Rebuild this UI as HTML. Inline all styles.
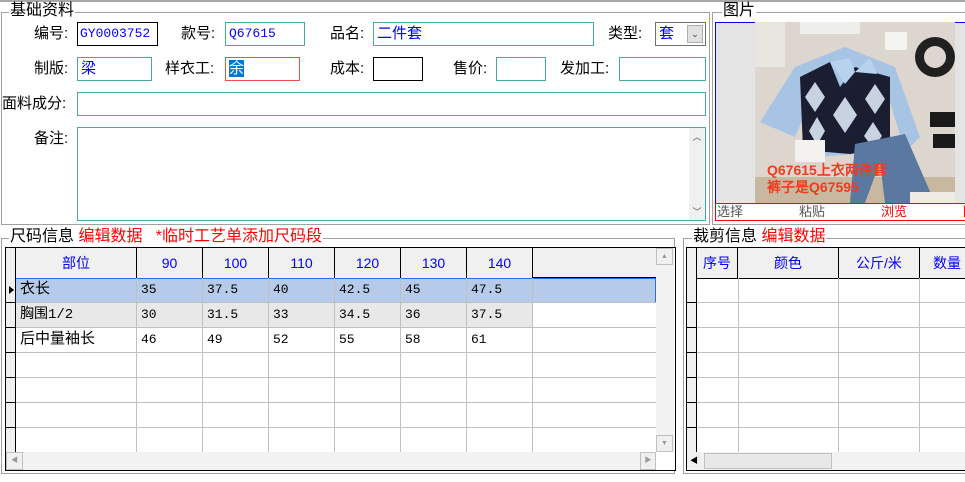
<!DOCTYPE html>
<html><head><meta charset="utf-8"><style>
*{box-sizing:border-box;margin:0;padding:0}
body{width:965px;height:482px;overflow:hidden;background:#fff;position:relative;font-family:"Liberation Sans","WenQuanYi Zen Hei","Noto Sans CJK SC",sans-serif;font-size:14px;color:#000}
.a{position:absolute;white-space:nowrap}
.fs{position:absolute;border:1px solid #a0a0a0;box-shadow:inset 1px 1px 0 #fff}
.lg{position:absolute;background:#fff;padding:0 1px;font-size:16px;line-height:18px}
.in{position:absolute;border:1px solid #4aa8a0;background:#fff;height:24px;line-height:22px;padding-left:3px;color:#0000ff;font-size:15px}
.lb{position:absolute;line-height:24px;font-size:15px}
.c{position:absolute;font-size:13px;line-height:24px;padding-left:4px;font-family:"Liberation Mono","WenQuanYi Zen Hei",monospace}
.h{position:absolute;background:#f0f0f0;border-right:1px solid #000;border-bottom:1px solid #000;color:#0000ff;text-align:center;line-height:30px;font-size:14px}
.red{color:#ff0000}
</style></head><body>
<div class="a" style="left:0;top:0;width:965px;height:2px;background:#a8a8a8"></div>

<div class="fs" style="left:1px;top:12px;width:709px;height:213px"></div>
<div class="lg" style="left:9px;top:2px">基础资料</div>
<div class="lb" style="left:34px;top:22px">编号:</div>
<div class="in" style="left:77px;top:22px;width:81px;border-color:#000;font-family:'Liberation Mono',monospace;font-size:13px;padding-left:2px">GY0003752</div>
<div class="lb" style="left:181px;top:22px">款号:</div>
<div class="in" style="left:225px;top:22px;width:80px;font-family:'Liberation Mono',monospace;font-size:13px">Q67615</div>
<div class="lb" style="left:330px;top:22px">品名:</div>
<div class="in" style="left:373px;top:22px;width:221px">二件套</div>
<div class="lb" style="left:608px;top:22px">类型:</div>
<div class="in" style="left:655px;top:22px;width:51px;border-color:#707070">套</div>
<div class="a" style="left:687px;top:25px;width:16px;height:18px;background:#e1e1e1;border:1px solid #adadad;font-size:9px;text-align:center;line-height:16px;color:#444">⌄</div>

<div class="lb" style="left:34px;top:57px">制版:</div>
<div class="in" style="left:77px;top:57px;width:75px">梁</div>
<div class="lb" style="left:165px;top:57px">样衣工:</div>
<div class="in" style="left:225px;top:57px;width:75px;border-color:#f05050"><span style="background:#0078d7;color:#fff">余</span></div>
<div class="lb" style="left:330px;top:57px">成本:</div>
<div class="in" style="left:373px;top:57px;width:50px;border-color:#000"></div>
<div class="lb" style="left:453px;top:57px">售价:</div>
<div class="in" style="left:496px;top:57px;width:50px"></div>
<div class="lb" style="left:560px;top:57px">发加工:</div>
<div class="in" style="left:619px;top:57px;width:87px"></div>

<div class="lb" style="left:2px;top:92px">面料成分:</div>
<div class="in" style="left:77px;top:92px;width:629px"></div>
<div class="lb" style="left:34px;top:127px">备注:</div>
<div class="in" style="left:77px;top:127px;width:629px;height:94px"></div>
<div class="a" style="left:689px;top:128px;width:16px;height:92px;background:#f0f0f0;font-size:9px;color:#555;text-align:center">
<div style="margin-top:2px">︿</div><div style="margin-top:62px">﹀</div></div>

<div class="fs" style="left:712px;top:12px;width:260px;height:213px"></div>
<div class="lg" style="left:722px;top:2px">图片</div>
<div class="a" style="left:715px;top:22px;width:260px;height:199px;border:1px solid #0000ff;background:#e4e4e4"></div>
<svg class="a" style="left:755px;top:22px" width="200" height="181" viewBox="0 0 200 181">
<rect width="200" height="181" fill="#ddd6ce"/>
<rect x="0" y="155" width="200" height="26" fill="#c8b8a0"/>
<rect x="45" y="0" width="60" height="12" fill="#eeeeea"/>
<rect x="0" y="0" width="30" height="45" fill="#e8e6e0"/>
<circle cx="180" cy="35" r="20" fill="#202020"/><circle cx="180" cy="35" r="11" fill="#ddd6ce"/>
<rect x="130" y="10" width="22" height="18" fill="#f4f4f0"/>
<path d="M40 45 L90 25 L140 45 L165 115 L150 130 L135 80 L130 130 L60 135 L55 80 L40 115 L5 100 Z" fill="#a8c4e4"/>
<path d="M45 55 L75 40 L85 65 L100 45 L135 55 L135 125 L95 132 L48 128 Z" fill="#1a1e30"/>
<path d="M60 60 l10 15 l-10 15 l-10 -15z M90 75 l12 18 l-12 18 l-12 -18z M120 62 l10 15 l-10 15 l-10 -15z M62 95 l8 14 l-8 14 l-8 -14z M118 100 l9 14 l-9 12 l-9 -12z" fill="#c8d2e0"/>
<path d="M75 40 L95 36 L100 50 L90 62 Z M100 50 L115 36 L122 52 Z" fill="#b8d2ee"/>
<path d="M100 122 L150 112 L180 181 L130 181 L125 140 L110 181 L95 181 Z" fill="#5a78a0"/>
<rect x="40" y="118" width="30" height="22" fill="#f4f2ee"/>
<rect x="175" y="90" width="25" height="15" fill="#1a1a1a"/><rect x="178" y="112" width="22" height="14" fill="#1a1a1a"/>
<rect x="155" y="170" width="45" height="11" fill="#f0ece4"/>
<text x="12" y="153" font-family="Liberation Sans,WenQuanYi Zen Hei,sans-serif" font-size="14" font-weight="bold" fill="#f03c1e">Q67615上衣两件套</text>
<text x="12" y="170" font-family="Liberation Sans,WenQuanYi Zen Hei,sans-serif" font-size="14" font-weight="bold" fill="#f03c1e">裤子是Q67595</text>
</svg>
<div class="a" style="left:715px;top:203px;width:260px;height:18px;border:1px solid #ff0000;background:#fff;font-size:13px;line-height:16px;color:#555">
<span class="a" style="left:1px">选择</span><span class="a" style="left:83px">粘贴</span><span class="a red" style="left:165px">浏览</span><span class="a red" style="left:247px">图</span></div>

<div class="fs" style="left:1px;top:238px;width:674px;height:236px"></div>
<div class="lg" style="left:9px;top:228px">尺码信息 <span class="red">编辑数据 &nbsp; *临时工艺单添加尺码段</span></div>
<div class="a" style="left:5px;top:247px;width:671px;height:224px;border:1px solid #000;background:#fff"></div>
<div class="a" style="left:6px;top:248px;width:10px;height:204px;background:#f0f0f0;border-right:1px solid #000"></div>
<div class="h" style="left:16px;top:248px;width:121px">部位</div>
<div class="h" style="left:137px;top:248px;width:66px">90</div>
<div class="h" style="left:203px;top:248px;width:66px">100</div>
<div class="h" style="left:269px;top:248px;width:66px">110</div>
<div class="h" style="left:335px;top:248px;width:66px">120</div>
<div class="h" style="left:401px;top:248px;width:66px">130</div>
<div class="h" style="left:467px;top:248px;width:66px">140</div>
<div class="a" style="left:533px;top:248px;width:123px;height:30px;background:#f0f0f0;border-bottom:1px solid #000"></div>
<div class="a" style="left:16px;top:278px;width:640px;height:25px;background:#b5cbe9;border:1px solid #2a6fd0;border-left:none"></div>
<div class="a" style="left:16px;top:303px;width:517px;height:25px;background:#e8e8e8"></div>
<div class="a" style="left:9px;top:286px;width:0;height:0;border-left:5px solid #000;border-top:4px solid transparent;border-bottom:4px solid transparent"></div>
<svg class="a" style="left:6px;top:278px" width="650" height="175">
<g stroke="#c0c0c0" stroke-width="1">
<line x1="0" y1="49.5" x2="650" y2="49.5"/><line x1="0" y1="74.5" x2="650" y2="74.5"/><line x1="0" y1="99.5" x2="650" y2="99.5"/><line x1="0" y1="124.5" x2="650" y2="124.5"/><line x1="0" y1="149.5" x2="650" y2="149.5"/><line x1="10" y1="24.5" x2="650" y2="24.5"/>
<line x1="130.5" y1="0" x2="130.5" y2="174"/><line x1="196.5" y1="0" x2="196.5" y2="174"/><line x1="262.5" y1="0" x2="262.5" y2="174"/><line x1="328.5" y1="0" x2="328.5" y2="174"/><line x1="394.5" y1="0" x2="394.5" y2="174"/><line x1="460.5" y1="0" x2="460.5" y2="174"/><line x1="526.5" y1="0" x2="526.5" y2="174"/>
</g>
<g stroke="#000"><line x1="0" y1="24.5" x2="10" y2="24.5"/><line x1="0" y1="49.5" x2="10" y2="49.5"/><line x1="0" y1="74.5" x2="10" y2="74.5"/><line x1="0" y1="99.5" x2="10" y2="99.5"/><line x1="0" y1="124.5" x2="10" y2="124.5"/><line x1="0" y1="149.5" x2="10" y2="149.5"/></g>
</svg>
<div class="c" style="left:16px;top:278px;font-size:15px">衣长</div>
<div class="c" style="left:137px;top:278px">35</div><div class="c" style="left:203px;top:278px">37.5</div><div class="c" style="left:269px;top:278px">40</div><div class="c" style="left:335px;top:278px">42.5</div><div class="c" style="left:401px;top:278px">45</div><div class="c" style="left:467px;top:278px">47.5</div>
<div class="c" style="left:16px;top:303px;font-size:14px">胸围1/2</div>
<div class="c" style="left:137px;top:303px">30</div><div class="c" style="left:203px;top:303px">31.5</div><div class="c" style="left:269px;top:303px">33</div><div class="c" style="left:335px;top:303px">34.5</div><div class="c" style="left:401px;top:303px">36</div><div class="c" style="left:467px;top:303px">37.5</div>
<div class="c" style="left:16px;top:328px;font-size:15px">后中量袖长</div>
<div class="c" style="left:137px;top:328px">46</div><div class="c" style="left:203px;top:328px">49</div><div class="c" style="left:269px;top:328px">52</div><div class="c" style="left:335px;top:328px">55</div><div class="c" style="left:401px;top:328px">58</div><div class="c" style="left:467px;top:328px">61</div>
<div class="a" style="left:656px;top:248px;width:18px;height:204px;background:#f2f2f2"></div>
<div class="a" style="left:656px;top:248px;width:17px;height:17px;background:#f0f0f0;border:1px solid #c0c0c0;font-size:7px;text-align:center;line-height:15px;color:#999">▲</div>
<div class="a" style="left:656px;top:435px;width:17px;height:17px;background:#f0f0f0;border:1px solid #c0c0c0;font-size:7px;text-align:center;line-height:15px;color:#999">▼</div>
<div class="a" style="left:6px;top:452px;width:650px;height:18px;background:#f2f2f2"></div>
<div class="a" style="left:6px;top:452px;width:17px;height:18px;background:#f0f0f0;border:1px solid #c0c0c0;font-size:7px;text-align:center;line-height:16px;color:#999">◀</div>
<div class="a" style="left:640px;top:452px;width:16px;height:18px;background:#f0f0f0;border:1px solid #c0c0c0;font-size:7px;text-align:center;line-height:16px;color:#999">▶</div>

<div class="fs" style="left:683px;top:238px;width:290px;height:236px"></div>
<div class="lg" style="left:692px;top:228px">裁剪信息 <span class="red">编辑数据</span></div>
<div class="a" style="left:686px;top:247px;width:290px;height:224px;border:1px solid #000;background:#fff"></div>
<div class="a" style="left:687px;top:248px;width:10px;height:204px;background:#f0f0f0;border-right:1px solid #000"></div>
<div class="h" style="left:697px;top:248px;width:41px">序号</div>
<div class="h" style="left:738px;top:248px;width:101px">颜色</div>
<div class="h" style="left:839px;top:248px;width:81px">公斤/米</div>
<div class="h" style="left:920px;top:248px;width:60px;text-align:left;padding-left:13px">数量</div>
<svg class="a" style="left:687px;top:278px" width="280" height="175">
<g stroke="#c0c0c0"><line x1="10" y1="24.5" x2="280" y2="24.5"/><line x1="10" y1="49.5" x2="280" y2="49.5"/><line x1="10" y1="74.5" x2="280" y2="74.5"/><line x1="10" y1="99.5" x2="280" y2="99.5"/><line x1="10" y1="124.5" x2="280" y2="124.5"/><line x1="10" y1="149.5" x2="280" y2="149.5"/>
<line x1="51.5" y1="0" x2="51.5" y2="174"/><line x1="151.5" y1="0" x2="151.5" y2="174"/><line x1="232.5" y1="0" x2="232.5" y2="174"/></g>
<g stroke="#000"><line x1="0" y1="24.5" x2="10" y2="24.5"/><line x1="0" y1="49.5" x2="10" y2="49.5"/><line x1="0" y1="74.5" x2="10" y2="74.5"/><line x1="0" y1="99.5" x2="10" y2="99.5"/><line x1="0" y1="124.5" x2="10" y2="124.5"/><line x1="0" y1="149.5" x2="10" y2="149.5"/></g>
</svg>
<div class="a" style="left:687px;top:452px;width:280px;height:18px;background:#f2f2f2"></div>
<div class="a" style="left:687px;top:452px;width:14px;height:18px;background:#f0f0f0;font-size:8px;text-align:center;line-height:18px">◀</div>
<div class="a" style="left:704px;top:453px;width:128px;height:16px;background:#e8e8e8;border:1px solid #c0c0c0"></div>
</body></html>
